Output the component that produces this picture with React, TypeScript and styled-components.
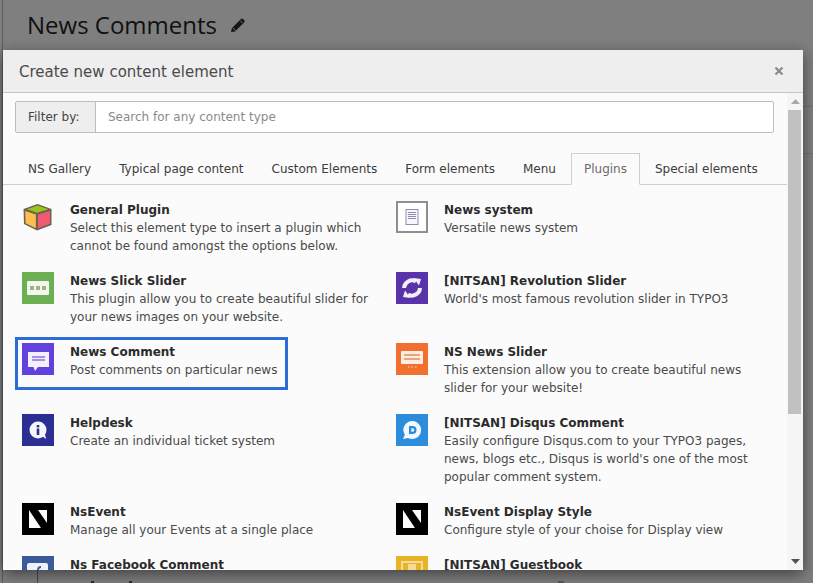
import React from "react";
import styled, { createGlobalStyle } from "styled-components";

const Global = createGlobalStyle`
  html, body { margin: 0; padding: 0; height: 100%; background: #7f7f7f; overflow: hidden; }
  #root { height: 100%; }
`;

const Page = styled.div`
  position: relative;
  width: 813px;
  height: 583px;
  overflow: hidden;
  background: #7f7f7f;
  padding-left: 2px;
  box-sizing: border-box;
  font-family: "DejaVu Sans", Verdana, sans-serif;
`;

const Backdrop = styled.div`
  height: 100%;
  border-left: 1px solid #5c5c5c;
`;

const PageHeader = styled.header`
  display: flex;
  align-items: center;
  gap: 13px;
  height: 50px;
  padding-left: 24px;
`;

const PageTitle = styled.h1`
  margin: 0;
  font: 400 24px/48px "Open Sans", sans-serif;
  color: #101010;
`;

const PageRules = styled.div`
  display: flex;
  flex-direction: column;
  gap: 46px;
  padding-top: 56px;
`;

const PageRule = styled.div`
  height: 1px;
  background: #717171;
`;

const PageFooter = styled.div`
  display: flex;
  align-items: flex-end;
  height: 13px;
  margin-top: 416px;
  padding-left: 34px;
`;

const FooterLine = styled.div`
  width: 1px;
  height: 13px;
  background: #4a4a4a;
`;

const FooterMark = styled.div<{ $gap: number; $wide?: boolean }>`
  width: ${(p) => (p.$wide ? 6 : 3)}px;
  height: 2px;
  margin-left: ${(p) => p.$gap}px;
  background: ${(p) => (p.$wide ? "#5a5a5a" : "#2a2a2a")};
`;

const Modal = styled.section`
  position: absolute;
  left: 3px;
  top: 50px;
  width: 800px;
  height: 520px;
  display: flex;
  flex-direction: column;
  background: #fbfbfb;
  box-shadow: 0 4px 14px rgba(0, 0, 0, 0.5);
  overflow: hidden;
`;

const ModalHeader = styled.div`
  flex: none;
  height: 42px;
  display: flex;
  align-items: center;
  justify-content: space-between;
  padding: 0 19px 0 16px;
  background: #eeeeee;
  border-bottom: 1px solid #c4c4c4;
`;

const ModalTitle = styled.h2`
  margin: 2px 0 0;
  font-size: 15px;
  font-weight: 400;
  color: #4a4a4a;
`;

const Close = styled.span`
  display: flex;
  color: #8a8a8a;
`;

const ModalBody = styled.div`
  flex: 1;
  min-height: 0;
  display: flex;
`;

const Content = styled.div`
  flex: 1;
  min-width: 0;
  overflow: hidden;
  padding-top: 8px;
`;

const Filter = styled.div`
  display: flex;
  height: 32px;
  margin: 0 13px 0 12px;
  box-sizing: border-box;
  border: 1px solid #bdbdbd;
  border-radius: 2px;
  background: #fff;
  font-size: 12px;
`;

const FilterLabel = styled.div`
  width: 80px;
  display: flex;
  align-items: center;
  padding-left: 12px;
  box-sizing: border-box;
  background: #eeeeee;
  border-right: 1px solid #bdbdbd;
  color: #444;
`;

const FilterInput = styled.div`
  flex: 1;
  display: flex;
  align-items: center;
  padding-left: 12px;
  color: #8a8a8a;
`;

const Tabs = styled.nav`
  display: flex;
  height: 32px;
  margin-top: 20px;
  padding-left: 12px;
  box-sizing: border-box;
  border-bottom: 1px solid #d0d0d0;
  font-size: 12px;
`;

const Tab = styled.div<{ $active?: boolean }>`
  height: 32px;
  box-sizing: border-box;
  margin-right: 2px;
  padding: 0 12px;
  display: flex;
  align-items: center;
  border: 1px solid ${(p) => (p.$active ? "#cfcfcf" : "transparent")};
  border-bottom-color: ${(p) => (p.$active ? "#fbfbfb" : "transparent")};
  background: ${(p) => (p.$active ? "#fbfbfb" : "transparent")};
  color: ${(p) => (p.$active ? "#6a6a6a" : "#3c3c3c")};
`;

const Grid = styled.div`
  display: grid;
  grid-template-columns: 374px 374px;
  padding: 15px 0 0 19px;
  row-gap: 16px;
  align-items: start;
`;

const Item = styled.div<{ $highlight?: boolean }>`
  position: relative;
  display: flex;
  gap: 16px;
  font-size: 12px;
  line-height: 18px;
  ${(p) =>
    p.$highlight &&
    `&::after {
      content: "";
      position: absolute;
      left: -7px;
      top: -5px;
      width: 273px;
      height: 53px;
      box-sizing: border-box;
      border: 3px solid #2d6bd8;
    }`}
`;

const IconBox = styled.div`
  flex: none;
  width: 32px;
  height: 32px;
  margin-top: 1px;
`;

const ItemText = styled.div`
  min-width: 0;
  padding-top: 1px;
`;

const ItemTitle = styled.div`
  font-weight: 700;
  color: #2b2b2b;
`;

const ItemDesc = styled.div`
  color: #4a4a4a;
`;

const Scrollbar = styled.div`
  flex: none;
  width: 16px;
  display: flex;
  flex-direction: column;
  background: #f5f5f5;
`;

const ScrollButton = styled.div`
  height: 17px;
  display: flex;
  align-items: center;
  justify-content: center;
`;

const ScrollThumb = styled.div`
  height: 304px;
  margin: 0 2px 0 1px;
  background: #c1c1c1;
`;

const ScrollTrack = styled.div`
  flex: 1;
`;

const Svg = ({ children }: { children: React.ReactNode }) => (
  <svg width="32" height="32" viewBox="0 0 32 32">{children}</svg>
);

const Cube = () => (
  <Svg>
    <path d="M15.5 3 L1.5 8 L2 23 L15 29.5 L29.5 24 V8 Z" fill="#6d6253" />
    <path d="M15.5 4.5 L5 8.3 L15 11.8 L26.5 8.3 Z" fill="#9cc21f" />
    <path d="M3.2 10 L13.8 13.5 V27.3 L3.6 22.3 Z" fill="#fdbe4e" />
    <path d="M16 13.5 L28 10 V22.8 L16 27.3 Z" fill="#ef5a6f" />
  </Svg>
);
const NewsSystem = () => (
  <Svg>
    <rect x="1" y="1" width="30" height="30" fill="#fff" stroke="#8f8f8f" strokeWidth="2" />
    <rect x="10" y="8.5" width="12" height="15" fill="#f6f6fb" stroke="#8d8dae" />
    <path d="M12 11.5h8M12 13.5h8M12 15.5h8M12 17.5h8" stroke="#8d8dae" />
  </Svg>
);
const Slick = () => (
  <Svg>
    <rect width="32" height="32" fill="#6cae52" />
    <rect x="5" y="9" width="22" height="14" rx="1" fill="#f3f6ec" />
    <rect x="8" y="14" width="4" height="4" fill="#9fb57e" />
    <rect x="14" y="14" width="4" height="4" fill="#9fb57e" />
    <rect x="20" y="14" width="4" height="4" fill="#9fb57e" />
  </Svg>
);
const Revolution = () => (
  <Svg>
    <rect width="32" height="32" fill="#5933a9" />
    <path d="M8 16 A8 8 0 0 1 20 9.5" fill="none" stroke="#f3eff9" strokeWidth="4" />
    <path d="M17.5 6 L25 7 L23 13.5 Z" fill="#f3eff9" />
    <path d="M24 16 A8 8 0 0 1 12 22.5" fill="none" stroke="#f3eff9" strokeWidth="4" />
    <path d="M14.5 26 L7 25 L9 18.5 Z" fill="#f3eff9" />
  </Svg>
);
const CommentIcon = () => (
  <Svg>
    <rect width="32" height="32" fill="#6241dd" />
    <path d="M6 9 H27 V24 H16 L13 28 L11.5 24 H6 Z" fill="#f3effd" />
    <path d="M10 14h13M10 17h13" stroke="#8a72e6" strokeWidth="1.4" />
  </Svg>
);
const NewsSlider = () => (
  <Svg>
    <rect width="32" height="32" fill="#f1702f" />
    <rect x="5" y="8" width="22" height="13" rx="1" fill="#fbeee3" />
    <path d="M8 12h16" stroke="#e88a56" strokeWidth="1.5" />
    <path d="M8 16h16" stroke="#e88a56" strokeWidth="1.5" />
    <path d="M12 24h1.5M15.5 24h1.5M19 24h1.5" stroke="#fbdcc6" strokeWidth="1.2" />
  </Svg>
);
const Helpdesk = () => (
  <Svg>
    <rect width="32" height="32" fill="#2c2f92" />
    <circle cx="16" cy="16" r="8.5" fill="#f5f5fb" />
    <path d="M20 22 L24 25 L23 20 Z" fill="#f5f5fb" />
    <rect x="14.7" y="14.5" width="2.6" height="6.5" fill="#2c2f92" />
    <rect x="14.7" y="11" width="2.6" height="2.4" fill="#2c2f92" />
  </Svg>
);
const Disqus = () => (
  <Svg>
    <rect width="32" height="32" fill="#2b8ddc" />
    <path d="M16.5 7 A9 9 0 1 1 12 24 L7 25 L8.8 20.8 A9 9 0 0 1 16.5 7 Z" fill="#f3f8fd" />
    <path d="M13 12 H16.5 A4 4 0 0 1 16.5 20 H13 Z M15.3 14.2 V17.8 H16.5 A1.8 1.8 0 0 0 16.5 14.2 Z" fill="#2b8ddc" fillRule="evenodd" />
  </Svg>
);
const NsEventIcon = () => (
  <Svg>
    <rect width="32" height="32" fill="#000" />
    <path d="M7 7 L19 25 H7 Z" fill="#fafafa" />
    <path d="M16 7 H25 V20 Z" fill="#fafafa" />
  </Svg>
);
const Facebook = () => (
  <Svg>
    <rect width="32" height="32" fill="#3b5b98" />
    <rect x="5" y="7" width="21" height="22" rx="2" fill="#eef1f7" />
    <path d="M16 28 V14 Q16 11 19 11 M13.5 15.5 H18.5" fill="none" stroke="#3b5b98" strokeWidth="1.8" />
  </Svg>
);
const Guestbook = () => (
  <Svg>
    <rect width="32" height="32" fill="#e8b427" />
    <rect x="6" y="6" width="20" height="20" fill="none" stroke="#f4dc98" strokeWidth="2" />
    <rect x="12" y="8" width="8" height="8" fill="#f4dc98" />
  </Svg>
);

type Entry = { icon: React.ReactNode; title: string; desc?: React.ReactNode; highlight?: boolean };

const entries: Entry[] = [
  { icon: <Cube />, title: "General Plugin", desc: <>Select this element type to insert a plugin which<br />cannot be found amongst the options below.</> },
  { icon: <NewsSystem />, title: "News system", desc: "Versatile news system" },
  { icon: <Slick />, title: "News Slick Slider", desc: <>This plugin allow you to create beautiful slider for<br />your news images on your website.</> },
  { icon: <Revolution />, title: "[NITSAN] Revolution Slider", desc: "World's most famous revolution slider in TYPO3" },
  { icon: <CommentIcon />, title: "News Comment", desc: "Post comments on particular news", highlight: true },
  { icon: <NewsSlider />, title: "NS News Slider", desc: <>This extension allow you to create beautiful news<br />slider for your website!</> },
  { icon: <Helpdesk />, title: "Helpdesk", desc: "Create an individual ticket system" },
  { icon: <Disqus />, title: "[NITSAN] Disqus Comment", desc: <>Easily configure Disqus.com to your TYPO3 pages,<br />news, blogs etc., Disqus is world's one of the most<br />popular comment system.</> },
  { icon: <NsEventIcon />, title: "NsEvent", desc: "Manage all your Events at a single place" },
  { icon: <NsEventIcon />, title: "NsEvent Display Style", desc: "Configure style of your choise for Display view" },
  { icon: <Facebook />, title: "Ns Facebook Comment" },
  { icon: <Guestbook />, title: "[NITSAN] Guestbook" },
];

const tabs = ["NS Gallery", "Typical page content", "Custom Elements", "Form elements", "Menu", "Plugins", "Special elements"];

export default function App() {
  return (
    <Page>
      <Global />
      <Backdrop>
        <PageHeader>
          <PageTitle>News Comments</PageTitle>
          <svg width="16" height="16" viewBox="0 0 16 16">
            <path d="M1 15 L2 11 L11 2 Q12 1 13 2 L14.5 3.5 Q15 4.5 14 5.5 L5 14.5 Z" fill="#161616" />
            <path d="M3 11 L5.5 13.5 M10 3.5 L12.5 6" stroke="#7f7f7f" strokeWidth="0.9" />
          </svg>
        </PageHeader>
        <PageRules>
          <PageRule />
          <PageRule />
        </PageRules>
        <PageFooter>
          <FooterLine />
          <FooterMark $gap={53} />
          <FooterMark $gap={35} />
          <FooterMark $gap={426} $wide />
        </PageFooter>
      </Backdrop>
      <Modal>
        <ModalHeader>
          <ModalTitle>Create new content element</ModalTitle>
          <Close>
            <svg width="10" height="10" viewBox="0 0 10 10">
              <path d="M1.5 1.5 L8.5 8.5 M8.5 1.5 L1.5 8.5" stroke="currentColor" strokeWidth="2.2" />
            </svg>
          </Close>
        </ModalHeader>
        <ModalBody>
          <Content>
            <Filter>
              <FilterLabel>Filter by:</FilterLabel>
              <FilterInput>Search for any content type</FilterInput>
            </Filter>
            <Tabs>
              {tabs.map((t) => (
                <Tab key={t} $active={t === "Plugins"}>{t}</Tab>
              ))}
            </Tabs>
            <Grid>
              {entries.map((e) => (
                <Item key={e.title} $highlight={e.highlight}>
                  <IconBox>{e.icon}</IconBox>
                  <ItemText>
                    <ItemTitle>{e.title}</ItemTitle>
                    {e.desc && <ItemDesc>{e.desc}</ItemDesc>}
                  </ItemText>
                </Item>
              ))}
            </Grid>
          </Content>
          <Scrollbar>
            <ScrollButton>
              <svg width="9" height="5" viewBox="0 0 9 5"><path d="M4.5 0 L9 5 H0 Z" fill="#a8a8a8" /></svg>
            </ScrollButton>
            <ScrollThumb />
            <ScrollTrack />
            <ScrollButton>
              <svg width="9" height="5" viewBox="0 0 9 5"><path d="M0 0 H9 L4.5 5 Z" fill="#505050" /></svg>
            </ScrollButton>
          </Scrollbar>
        </ModalBody>
      </Modal>
    </Page>
  );
}
